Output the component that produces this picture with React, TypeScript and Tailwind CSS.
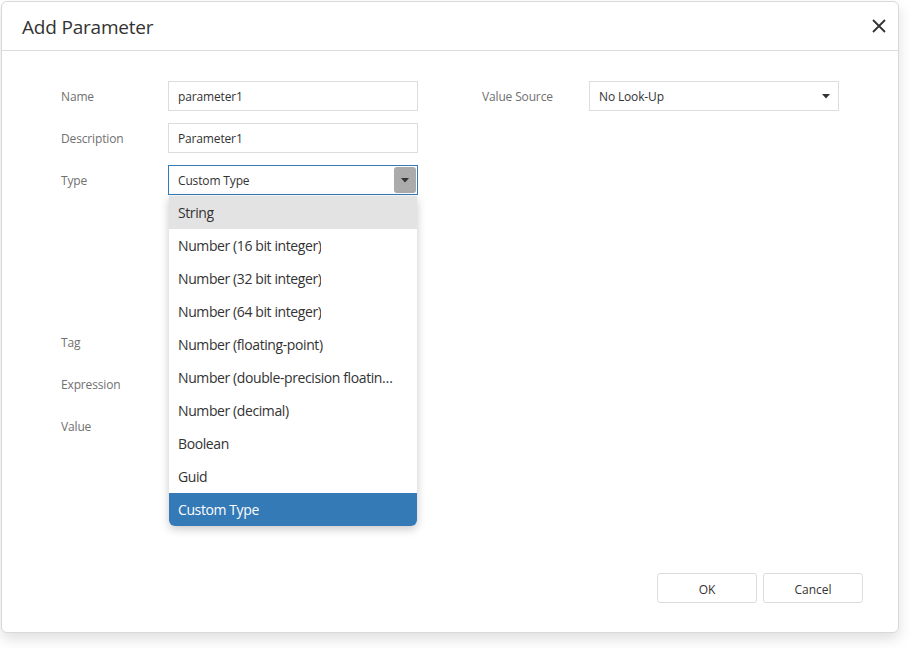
import React from "react";

const items = [
  "String",
  "Number (16 bit integer)",
  "Number (32 bit integer)",
  "Number (64 bit integer)",
  "Number (floating-point)",
  "Number (double-precision floating-point)",
  "Number (decimal)",
  "Boolean",
  "Guid",
  "Custom Type",
];

function Caret({ className = "" }: { className?: string }) {
  return (
    <svg width="8" height="5" viewBox="0 0 8 5" className={className}>
      <path d="M0 0 L8 0 L4 4.5 Z" fill="#333" />
    </svg>
  );
}

function Row({ label, children }: { label: string; children?: React.ReactNode }) {
  return (
    <div className="flex items-center h-[30px]">
      <div className="w-[107px] text-[12px] text-[#707070] pt-px tracking-[-0.15px]">{label}</div>
      {children}
    </div>
  );
}

function TextBox({ value }: { value: string }) {
  return (
    <div className="w-[250px] h-[30px] border border-[#dcdcdc] bg-white flex items-center px-[9px] pt-[2px] text-[12px] text-[#333] tracking-[-0.15px]">
      {value}
    </div>
  );
}

export default function App() {
  return (
    <div
      className="w-[911px] h-[648px] bg-white pt-px pl-px"
      style={{ fontFamily: '"Open Sans", "Noto Sans", sans-serif' }}
    >
      <div className="w-[898px] h-[632px] bg-white border border-[#d9d9d9] rounded-[6px] shadow-[0_6px_14px_rgba(0,0,0,0.13)] flex flex-col">
        <div className="h-[49px] border-b border-[#dcdcdc] flex items-center justify-between pl-[20px] pr-[12px] shrink-0">
          <div className="text-[19px] text-[#333] tracking-[-0.2px] pt-[2px]">Add Parameter</div>
          <svg width="14" height="14" viewBox="0 0 14 14">
            <path d="M1 1 L13 13 M13 1 L1 13" stroke="#333" strokeWidth="1.8" />
          </svg>
        </div>
        <div className="flex-1 flex flex-col">
          <div className="flex pl-[59px] pt-[30px]">
            <div className="flex flex-col gap-[12px]">
              <Row label="Name">
                <TextBox value="parameter1" />
              </Row>
              <Row label="Description">
                <TextBox value="Parameter1" />
              </Row>
              <Row label="Type">
                <div className="relative w-[250px] h-[30px]">
                  <div className="w-full h-full border border-[#337ab7] bg-white flex items-center justify-between pl-[9px] pr-px text-[12px] text-[#333] tracking-[-0.15px]">
                    <span className="pt-[2px]">Custom Type</span>
                    <div className="w-[22px] h-[26px] rounded-[3px] bg-[#ababab] flex items-center justify-center">
                      <Caret />
                    </div>
                  </div>
                  <div className="absolute left-px top-[31px] w-[248px] bg-white rounded-b-[6px] shadow-[0_3px_10px_rgba(0,0,0,0.22)] overflow-hidden z-10">
                    {items.map((it, i) => (
                      <div
                        key={it}
                        className={
                          "h-[33px] flex items-center pl-[9px] pr-[17px] text-[14px] tracking-[-0.4px] " +
                          (i === 0
                            ? "bg-[#e3e3e3] text-[#333]"
                            : i === items.length - 1
                            ? "bg-[#337ab7] text-white"
                            : "text-[#333]")
                        }
                      >
                        <span className="block overflow-hidden text-ellipsis whitespace-nowrap">{it}</span>
                      </div>
                    ))}
                  </div>
                </div>
              </Row>
              <div className="h-[108px]" />
              <Row label="Tag" />
              <Row label="Expression" />
              <Row label="Value" />
            </div>
            <div className="flex flex-col gap-[12px] ml-[64px]">
              <Row label="Value Source">
                <div className="w-[250px] h-[30px] border border-[#dcdcdc] bg-white flex items-center justify-between pl-[9px] pr-[8px] text-[12px] text-[#333] tracking-[-0.15px]">
                  <span className="pt-[2px]">No Look-Up</span>
                  <Caret />
                </div>
              </Row>
            </div>
          </div>
          <div className="mt-auto flex justify-end gap-[6px] pr-[35px] pb-[29px]">
            <button className="w-[100px] h-[30px] border border-[#dcdcdc] rounded-[3px] bg-white text-[12px] text-[#333] pt-[3px]">
              OK
            </button>
            <button className="w-[100px] h-[30px] border border-[#dcdcdc] rounded-[3px] bg-white text-[12px] text-[#333] pt-[3px]">
              Cancel
            </button>
          </div>
        </div>
      </div>
    </div>
  );
}
